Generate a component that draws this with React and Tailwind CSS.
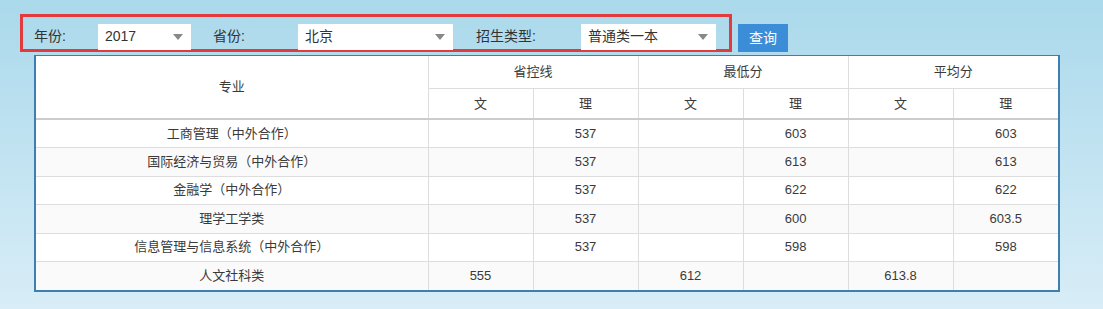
import React from 'react';

const rows = [
    { name: '工商管理（中外合作）', v: ['', '537', '', '603', '', '603'] },
    { name: '国际经济与贸易（中外合作）', v: ['', '537', '', '613', '', '613'] },
    { name: '金融学（中外合作）', v: ['', '537', '', '622', '', '622'] },
    { name: '理学工学类', v: ['', '537', '', '600', '', '603.5'] },
    { name: '信息管理与信息系统（中外合作）', v: ['', '537', '', '598', '', '598'] },
    { name: '人文社科类', v: ['555', '', '612', '', '613.8', ''] },
];

// Fake select box with gray triangle
const FakeSelect = ({ value, width }) => (
    <div className={`${width} h-[26px] bg-white flex items-center justify-between pl-[7px] pr-[8px] text-[14px] text-[#333]`}>
        <span>{value}</span>
        <span className="w-0 h-0 border-l-[5px] border-r-[5px] border-t-[6px] border-l-transparent border-r-transparent border-t-[#888]" />
    </div>
);

const App = () => {
    const font = { fontFamily: '"Liberation Sans", "Noto Sans CJK SC", sans-serif' };
    return (
        <div className="w-[1103px] h-[309px] bg-gradient-to-b from-[#aad9eb] to-[#d8edf7] pt-[14px] pl-[20px]" style={font}>
            {/* --- Filters --- */}
            <div className="flex items-start">
                <div className="flex items-center border-[3px] border-[#e23b3e] pt-[7px] pl-[11px] pr-[13px] h-[38px] text-[14px] text-[#333]">
                    <span className="w-[64px]">年份:</span>
                    <FakeSelect value="2017" width="w-[93px]" />
                    <span className="ml-[22px] w-[85px]">省份:</span>
                    <FakeSelect value="北京" width="w-[155px]" />
                    <span className="ml-[23px] w-[105px]">招生类型:</span>
                    <FakeSelect value="普通类一本" width="w-[135px]" />
                </div>
                <button className="ml-[6px] mt-[10px] w-[50px] h-[28px] bg-[#3a8dd6] text-white text-[14px]">查询</button>
            </div>

            {/* --- Table --- */}
            <div className="ml-[14px] mt-[3px] w-[1026px] bg-white border-2 border-t border-[#3f7eb0]">
                <table className="table-fixed border-collapse w-full text-[13px] text-[#3a3a3a] text-center">
                    <colgroup>
                        <col className="w-[392px]" />
                        {[0, 1, 2, 3, 4, 5].map(i => <col key={i} className="w-[105px]" />)}
                    </colgroup>
                    <thead>
                        <tr className="h-[32px]">
                            <th rowSpan={2} className="font-normal border-r border-[#ddd] border-b-2 border-b-[#ccc]">专业</th>
                            <th colSpan={2} className="font-normal border border-t-0 border-[#ddd]">省控线</th>
                            <th colSpan={2} className="font-normal border border-t-0 border-[#ddd]">最低分</th>
                            <th colSpan={2} className="font-normal border border-t-0 border-r-0 border-[#ddd]">平均分</th>
                        </tr>
                        <tr className="h-[31px]">
                            {['文', '理', '文', '理', '文', '理'].map((t, i) => (
                                <th key={i} className={`font-normal border-l border-r border-[#ddd] border-b-2 border-b-[#ccc] ${i === 5 ? 'border-r-0' : ''}`}>{t}</th>
                            ))}
                        </tr>
                    </thead>
                    <tbody>
                        {rows.map((r, ri) => (
                            <tr key={ri} className={`${ri % 2 === 1 ? 'h-[29px] bg-[#fafafa]' : 'h-[28px] bg-white'}`}>
                                <td className={`border-r border-[#ddd] ${ri < 5 ? 'border-b' : ''}`}>{r.name}</td>
                                {r.v.map((v, i) => (
                                    <td key={i} className={`border-[#ddd] ${i < 5 ? 'border-r' : ''} ${ri < 5 ? 'border-b' : ''}`}>{v}</td>
                                ))}
                            </tr>
                        ))}
                    </tbody>
                </table>
            </div>
        </div>
    );
};

export default App;
